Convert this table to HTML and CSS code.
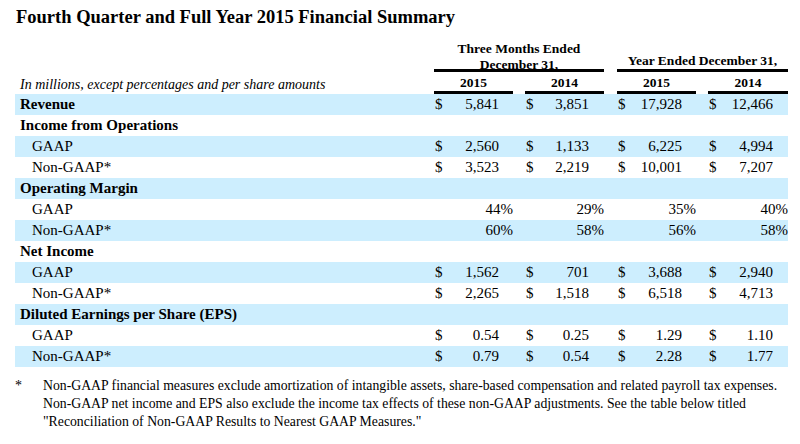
FILE: index.html
```html
<!DOCTYPE html>
<html lang="en">
<head>
<meta charset="utf-8">
<title>Fourth Quarter and Full Year 2015 Financial Summary</title>
<link rel="stylesheet" href="styles.css">
</head>
<body>
<h1 class="title">Fourth Quarter and Full Year 2015 Financial Summary</h1>
<div class="summary">
  <div class="row head-groups">
    <div class="group g1"><div class="group-text two">Three Months Ended<br>December 31,</div></div>
    <div class="group g2"><div class="group-text">Year Ended December 31,</div></div>
  </div>
  <div class="row head-years">
    <div class="label note">In millions, except percentages and per share amounts</div>
    <div class="year y1">2015</div>
    <div class="year y2">2014</div>
    <div class="year y3">2015</div>
    <div class="year y4">2014</div>
  </div>

  <div class="row shade">
    <div class="label bold">Revenue</div>
    <div class="cur c1">$</div><div class="val v1">5,841</div>
    <div class="cur c2">$</div><div class="val v2">3,851</div>
    <div class="cur c3">$</div><div class="val v3">17,928</div>
    <div class="cur c4">$</div><div class="val v4">12,466</div>
  </div>
  <div class="row">
    <div class="label bold">Income from Operations</div>
  </div>
  <div class="row shade">
    <div class="label sub">GAAP</div>
    <div class="cur c1">$</div><div class="val v1">2,560</div>
    <div class="cur c2">$</div><div class="val v2">1,133</div>
    <div class="cur c3">$</div><div class="val v3">6,225</div>
    <div class="cur c4">$</div><div class="val v4">4,994</div>
  </div>
  <div class="row">
    <div class="label sub">Non-GAAP*</div>
    <div class="cur c1">$</div><div class="val v1">3,523</div>
    <div class="cur c2">$</div><div class="val v2">2,219</div>
    <div class="cur c3">$</div><div class="val v3">10,001</div>
    <div class="cur c4">$</div><div class="val v4">7,207</div>
  </div>
  <div class="row shade">
    <div class="label bold">Operating Margin</div>
  </div>
  <div class="row">
    <div class="label sub">GAAP</div>
    <div class="pct p1">44%</div>
    <div class="pct p2">29%</div>
    <div class="pct p3">35%</div>
    <div class="pct p4">40%</div>
  </div>
  <div class="row shade">
    <div class="label sub">Non-GAAP*</div>
    <div class="pct p1">60%</div>
    <div class="pct p2">58%</div>
    <div class="pct p3">56%</div>
    <div class="pct p4">58%</div>
  </div>
  <div class="row">
    <div class="label bold">Net Income</div>
  </div>
  <div class="row shade">
    <div class="label sub">GAAP</div>
    <div class="cur c1">$</div><div class="val v1">1,562</div>
    <div class="cur c2">$</div><div class="val v2">701</div>
    <div class="cur c3">$</div><div class="val v3">3,688</div>
    <div class="cur c4">$</div><div class="val v4">2,940</div>
  </div>
  <div class="row">
    <div class="label sub">Non-GAAP*</div>
    <div class="cur c1">$</div><div class="val v1">2,265</div>
    <div class="cur c2">$</div><div class="val v2">1,518</div>
    <div class="cur c3">$</div><div class="val v3">6,518</div>
    <div class="cur c4">$</div><div class="val v4">4,713</div>
  </div>
  <div class="row shade">
    <div class="label bold">Diluted Earnings per Share (EPS)</div>
  </div>
  <div class="row">
    <div class="label sub">GAAP</div>
    <div class="cur c1">$</div><div class="val v1">0.54</div>
    <div class="cur c2">$</div><div class="val v2">0.25</div>
    <div class="cur c3">$</div><div class="val v3">1.29</div>
    <div class="cur c4">$</div><div class="val v4">1.10</div>
  </div>
  <div class="row shade">
    <div class="label sub">Non-GAAP*</div>
    <div class="cur c1">$</div><div class="val v1">0.79</div>
    <div class="cur c2">$</div><div class="val v2">0.54</div>
    <div class="cur c3">$</div><div class="val v3">2.28</div>
    <div class="cur c4">$</div><div class="val v4">1.77</div>
  </div>
</div>
<div class="footnote">
  <div class="mark">*</div>
  <p class="foot-text">Non-GAAP financial measures exclude amortization of intangible assets, share-based compensation and related payroll tax expenses. Non-GAAP net income and EPS also exclude the income tax effects of these non-GAAP adjustments. See the table below titled "Reconciliation of Non-GAAP Results to Nearest GAAP Measures."</p>
</div>
</body>
</html>
```

FILE: styles.css
```css
html, body {
  margin: 0;
  padding: 0;
  background: #ffffff;
}

body {
  width: 800px;
  height: 444px;
  overflow: hidden;
  font-family: "Liberation Serif", "Times New Roman", serif;
  color: #000000;
}

.title {
  margin: 0;
  padding: 6px 0 0 16px;
  font-size: 18.5px;
  line-height: 23px;
  font-weight: bold;
}

.summary {
  margin-left: 15px;
  width: 773px;
}

.row {
  display: grid;
  grid-template-columns: 419px 16px 49px 14px 12px 16px 48px 15px 13px 16px 49px 14px 12px 16px 49px 15px;
  height: 21px;
  font-size: 15px;
  line-height: 21px;
}

.shade {
  background: #cdeefe;
}

.label {
  grid-column: 1;
  white-space: nowrap;
}

.bold {
  font-weight: bold;
  padding-left: 5px;
}

.sub {
  padding-left: 17px;
}

.cur {
  padding-left: 1px;
}

.val {
  text-align: right;
}

.pct {
  text-align: right;
}

.c1 { grid-column: 2; }
.v1 { grid-column: 3; }
.c2 { grid-column: 6; }
.v2 { grid-column: 7; }
.c3 { grid-column: 10; }
.v3 { grid-column: 11; }
.c4 { grid-column: 14; }
.v4 { grid-column: 15; }
.p1 { grid-column: 2 / 5; }
.p2 { grid-column: 6 / 9; }
.p3 { grid-column: 10 / 13; }
.p4 { grid-column: 14 / 17; }

/* header rows */
.head-groups {
  height: 42px;
  margin-top: 1px;
}

.group {
  box-sizing: border-box;
  height: 42px;
  border-bottom: 3px solid #000;
  display: flex;
  align-items: flex-end;
  justify-content: center;
  text-align: center;
  font-size: 13.5px;
  line-height: 16px;
  font-weight: bold;
}

.g1 { grid-column: 2 / 9; }
.g2 { grid-column: 10 / 17; }

.group-text.two {
  margin-bottom: -4px;
}

.head-years {
  height: 22px;
}

.year {
  box-sizing: border-box;
  height: 22px;
  border-bottom: 3px solid #000;
  display: flex;
  align-items: flex-end;
  justify-content: center;
  font-size: 13.5px;
  line-height: 16px;
  font-weight: bold;
}

.y1 { grid-column: 2 / 5; }
.y2 { grid-column: 6 / 9; }
.y3 { grid-column: 10 / 13; }
.y4 { grid-column: 14 / 17; }

.note {
  display: flex;
  align-items: flex-end;
  padding-left: 5px;
  padding-bottom: 1px;
  font-style: italic;
  font-size: 14px;
  line-height: 16px;
}

/* footnote */
.footnote {
  display: flex;
  margin: 10px 0 0 15px;
  width: 780px;
}

.mark {
  width: 28px;
  flex: none;
  font-size: 14px;
  line-height: 18px;
}

.foot-text {
  margin: 0;
  font-size: 13.75px;
  line-height: 18px;
}
```
